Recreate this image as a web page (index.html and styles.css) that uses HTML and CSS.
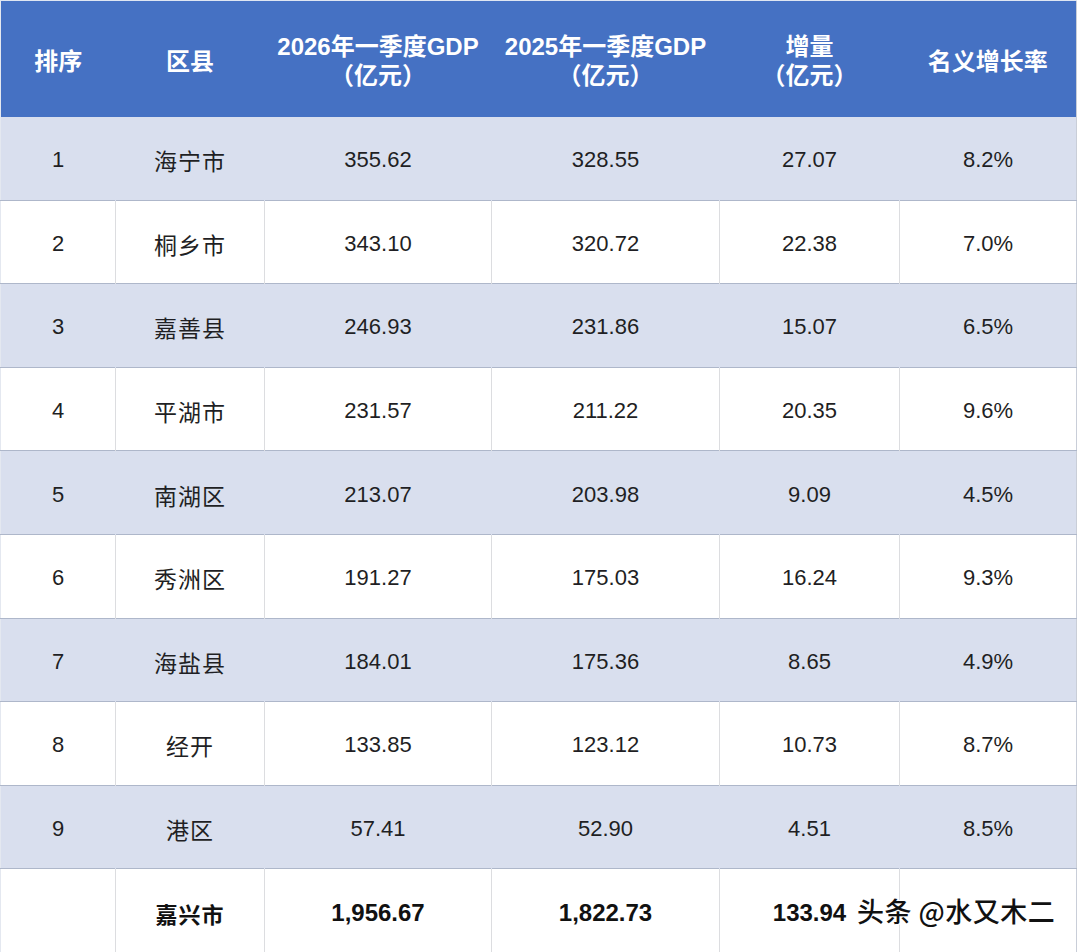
FILE: index.html
```html
<!DOCTYPE html>
<html lang="zh-CN">
<head>
<meta charset="utf-8">
<title>嘉兴各区县一季度GDP</title>
<link rel="stylesheet" href="styles.css">
</head>
<body>
<div class="sheet">
  <table class="gdp">
    <colgroup>
      <col class="c1"><col class="c2"><col class="c3"><col class="c4"><col class="c5"><col class="c6">
    </colgroup>
    <thead>
      <tr>
        <th>排序</th>
        <th>区县</th>
        <th>2026年一季度GDP<br>（亿元）</th>
        <th>2025年一季度GDP<br>（亿元）</th>
        <th>增量<br>（亿元）</th>
        <th>名义增长率</th>
      </tr>
    </thead>
    <tbody>
      <tr class="shade"><td>1</td><td class="cn">海宁市</td><td>355.62</td><td>328.55</td><td>27.07</td><td>8.2%</td></tr>
      <tr><td>2</td><td class="cn">桐乡市</td><td>343.10</td><td>320.72</td><td>22.38</td><td>7.0%</td></tr>
      <tr class="shade"><td>3</td><td class="cn">嘉善县</td><td>246.93</td><td>231.86</td><td>15.07</td><td>6.5%</td></tr>
      <tr><td>4</td><td class="cn">平湖市</td><td>231.57</td><td>211.22</td><td>20.35</td><td>9.6%</td></tr>
      <tr class="shade"><td>5</td><td class="cn">南湖区</td><td>213.07</td><td>203.98</td><td>9.09</td><td>4.5%</td></tr>
      <tr><td>6</td><td class="cn">秀洲区</td><td>191.27</td><td>175.03</td><td>16.24</td><td>9.3%</td></tr>
      <tr class="shade"><td>7</td><td class="cn">海盐县</td><td>184.01</td><td>175.36</td><td>8.65</td><td>4.9%</td></tr>
      <tr><td>8</td><td class="cn">经开</td><td>133.85</td><td>123.12</td><td>10.73</td><td>8.7%</td></tr>
      <tr class="shade"><td>9</td><td class="cn">港区</td><td>57.41</td><td>52.90</td><td>4.51</td><td>8.5%</td></tr>
      <tr class="total"><td></td><td class="cn">嘉兴市</td><td>1,956.67</td><td>1,822.73</td><td>133.94</td><td></td></tr>
    </tbody>
  </table>
  <div class="watermark">头条 @水又木二</div>
</div>
</body>
</html>
```

FILE: styles.css
```css
html, body {
  margin: 0;
  padding: 0;
  background: #ffffff;
}

.sheet {
  position: relative;
  width: 1080px;
  height: 952px;
  overflow: hidden;
  font-family: "Liberation Sans", "Noto Sans CJK SC", sans-serif;
}

.gdp {
  width: 1076px;
  table-layout: fixed;
  border-collapse: collapse;
  border-left: 1px solid #e4e8f0;
  border-right: 1px solid #c9ced8;
}

.c1 { width: 115px; }
.c2 { width: 149px; }
.c3 { width: 227px; }
.c4 { width: 228px; }
.c5 { width: 180px; }
.c6 { width: 177px; }

.gdp thead tr {
  height: 116px;
  background: #4571c3;
}

.gdp th {
  color: #ffffff;
  font-weight: bold;
  font-size: 24px;
  line-height: 29px;
  text-align: center;
  vertical-align: middle;
  padding: 5px 0 0 0;
  border-top: 1px solid #dfe6f2;
}

.gdp tbody tr {
  height: 83.6px;
  background: #ffffff;
  border-bottom: 1px solid #aeb7ca;
}

.gdp tbody tr.shade {
  background: #d9dfee;
}

.gdp td {
  color: #1f1f24;
  font-size: 22px;
  text-align: center;
  vertical-align: middle;
  padding: 4px 0 0 0;
  border-left: 1px solid #dcdde0;
}

.gdp tr.shade td {
  border-left-color: #d9dfee;
}

.gdp td:first-child {
  border-left: none;
}

.gdp td.cn {
  font-size: 23px;
  letter-spacing: 1px;
}

.gdp tr.total td {
  font-weight: bold;
  font-size: 24px;
  color: #111111;
}

.gdp tr.total td.cn {
  font-size: 22px;
}

.watermark {
  position: absolute;
  left: 857px;
  top: 893px;
  font-family: "Noto Sans CJK SC", "Liberation Sans", sans-serif;
  font-size: 27px;
  font-weight: 500;
  line-height: 36px;
  color: #111111;
  letter-spacing: 0.5px;
  text-shadow: 1px 1px 0 #ffffff, -1px -1px 0 #ffffff, 1px -1px 0 #ffffff, -1px 1px 0 #ffffff;
}
```
